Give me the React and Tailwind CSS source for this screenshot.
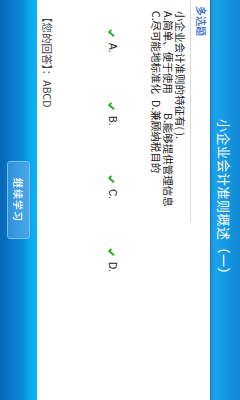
import React from 'react';

const cjk = "font-['Noto_Sans_CJK_SC','Noto_Sans',sans-serif]";

const Check = () => (
  <svg width="8" height="7" viewBox="0 0 8 7" className="shrink-0">
    <polyline points="0.8,3.6 3,5.8 7.2,1" fill="none" stroke="#1fae1f" strokeWidth="1.8" />
  </svg>
);

const options = ['A.', 'B.', 'C.', 'D.'];

const App = () => {
  return (
    <div className="w-[240px] h-[400px] overflow-hidden bg-white">
      {/* the app is drawn in landscape and turned a quarter clockwise */}
      <div className={`w-[400px] h-[240px] flex flex-col origin-top-left [transform:translateX(240px)_rotate(90deg)] ${cjk}`}>
        <div className="h-[30px] shrink-0 flex items-center justify-center bg-[linear-gradient(to_bottom,#128ad6_0%,#1596de_45%,#1ea3ea_80%,#1b9ae4_92%,#1377c6_100%)]">
          <span className="text-[13px] leading-none text-white tracking-[0.5px]">小企业会计准则概述（一）</span>
        </div>

        <div className="flex-1 flex flex-col bg-white">
          <div className="pl-[6px] pt-[3px] h-[19px] text-[10px] leading-[12px] text-[#2a62b8] font-medium">多选题</div>
          <div className="w-[222px] h-px bg-[#dcdcdc]"></div>
          <div className="pl-[11px] pt-[4px] text-[10.5px] leading-[12px] text-[#222]">
            <div>小企业会计准则的特征有( ).</div>
            <div className="flex">
              <span className="w-[102px]">A.简单、便于使用</span>
              <span>B.能够提供管理信息</span>
            </div>
            <div className="flex">
              <span className="w-[89px]">C.尽可能地标准化</span>
              <span>D.兼顾纳税目的</span>
            </div>
          </div>
          <div className="flex pl-[29px] mt-[32px]">
            {options.map((o) => (
              <div key={o} className="w-[73px] flex items-center gap-[6px]">
                <Check />
                <span className="text-[10px] leading-[12px] text-[#222] font-['Liberation_Sans',sans-serif]">{o}</span>
              </div>
            ))}
          </div>
          <div className="mt-auto pl-[12px] pb-[4px] text-[10.5px] leading-[12px] text-[#444]">
            【您的回答】：ABCD
          </div>
        </div>

        <div className="h-[37px] shrink-0 flex items-center justify-center bg-[linear-gradient(to_bottom,#0db4f4_0%,#0aa2e8_25%,#0a8cd8_40%,#0a78c8_70%,#0866b6_100%)]">
          <button className="w-[78px] h-[23px] rounded-[3px] border border-[#74c2f2] bg-[linear-gradient(to_bottom,#4aa9ea,#2f8fdc)] text-white text-[10px] leading-none tracking-[1px] font-medium">
            继续学习
          </button>
        </div>
      </div>
    </div>
  );
};

export default App;
